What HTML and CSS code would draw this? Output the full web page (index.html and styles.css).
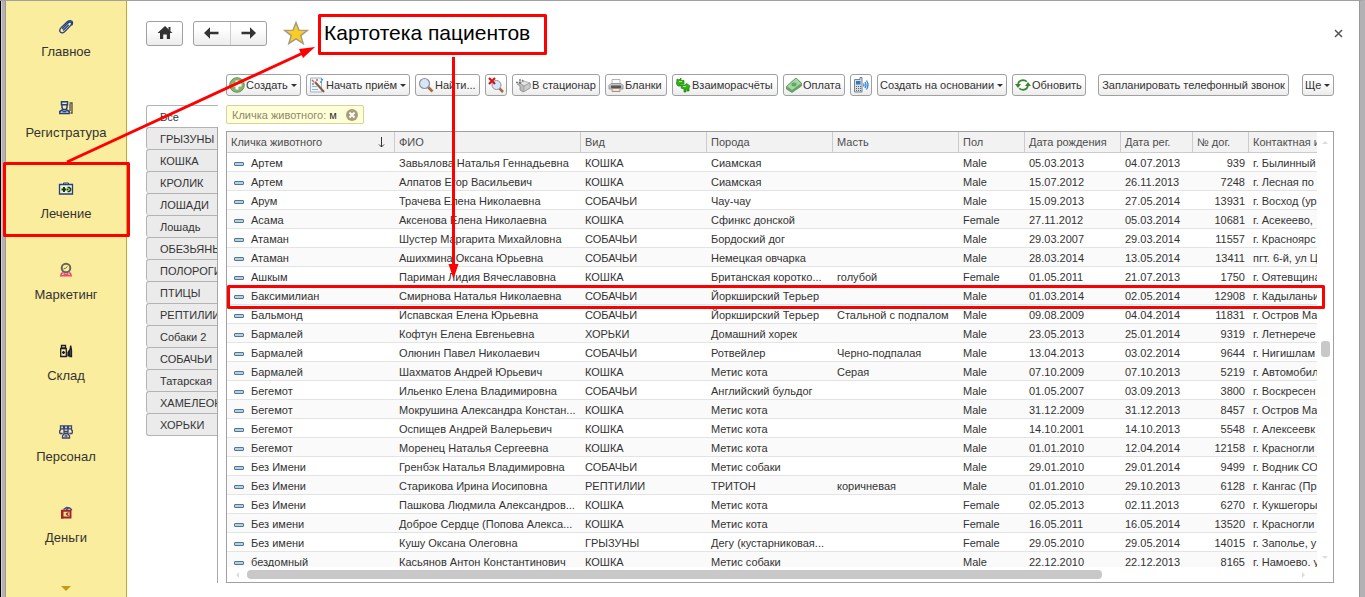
FILE: index.html
```html
<!DOCTYPE html>
<html lang="ru">
<head>
<meta charset="utf-8">
<title>Картотека пациентов</title>
<link rel="stylesheet" href="styles.css">
</head>
<body>
<div class="window">
<nav class="sections" aria-label="Разделы">
  <a class="section" href="#main"><svg width="16" height="16" viewBox="0 0 16 16" fill="none" stroke="#233f86" stroke-width="1.3" stroke-linecap="round"><path d="M4.500 9.500 10 4q2-1.700 3.200-.400 1 1.300-.700 3L6.600 12.700q-2.400 2-4.200.400-1.600-1.900.500-4.200L9 3q2.500-2 4.600-1 1.700 1.500.300 4M5.500 11l4.800-4.800"/></svg><span>Главное</span></a>
  <a class="section" href="#desk"><svg width="16" height="16" viewBox="0 0 16 16" fill="none" stroke="#233f86" stroke-width="1.500"><path d="M3.500 1.800h6v3h-6zM4 5v2.500l1 2h3l1-2V5M5 9.500l-3.200 2v2h9.400v-2L8 9.500M4.500 11.500h4"/><path stroke="#4d4b3c" stroke-width="1.300" d="M11.500 3H14v10h-1.500M12 4v7"/></svg><span>Регистратура</span></a>
  <a class="section" href="#care"><svg width="16" height="16" viewBox="0 0 16 16"><path fill="#f5f3cf" stroke="#233f86" stroke-width="1.300" d="M1.500 3.500h13v9.500h-13z"/><path fill="none" stroke="#233f86" d="M5.500 3.500V2h5v1.500"/><path fill="none" stroke="#114010" stroke-width="2" d="M3.500 8.500h5M6 6v5"/><path fill="none" stroke="#114010" stroke-width="1.600" d="M9.500 6.500h1.700l1.300 1.200v1.600l-1.300 1.200H9.500M9 8.500h1.500"/></svg><span>Лечение</span></a>
  <a class="section" href="#marketing"><svg width="16" height="16" viewBox="0 0 16 16" fill="none"><circle cx="8" cy="6" r="4.300" stroke="#66655a" stroke-width="2"/><path stroke="#66655a" d="M5.500 7Q8 6.500 9.500 4.500M4 9.500h2"/><path stroke="#ee4777" stroke-width="1.600" d="M4.800 10.500Q3 11.500 2.800 13.700h10.400q-.200-2.200-2-3.200M5.500 11.500 8 13l2.500-1.500"/></svg><span>Маркетинг</span></a>
  <a class="section" href="#stock"><svg width="16" height="16" viewBox="0 0 16 16" fill="none" stroke="#1b1c2b" stroke-width="1.300"><path d="M3.500 2.500h4V5h-4zM2.700 5.500h5.600v8H2.700zM4 9.500h3M5.500 8v3M10 13.500v-4l1-1.500v5.500M12 13.500V7l.700-4.500.800 4.500v6.500z"/></svg><span>Склад</span></a>
  <a class="section" href="#staff"><svg width="16" height="16" viewBox="0 0 16 16" fill="none" stroke="#33427f" stroke-width="1.300"><path d="M2.500 1.800h3v3h-3zM6.500 1.800h3v3h-3zM10.500 1.800h3v3h-3zM1.700 9.500V6.800L3 5M14.300 9.500V6.800L13 5M1.700 9.500h3M11.300 9.500h3M6 5.500v4h4v-4M6 7.500h4M4.500 14v-2L6 9.800h4l1.500 2.200v2zM6.500 12h3"/></svg><span>Персонал</span></a>
  <a class="section" href="#money"><svg width="16" height="16" viewBox="0 0 16 16" fill="none"><path stroke="#2f4a8e" stroke-width="1.400" d="m5.500 4.500 3-2 3 .500 2.500 2M8 5l2-1.500"/><path fill="#f7dc98" stroke="#a32222" stroke-width="1.900" d="M4 5.800h8.500v6.700H4z"/><path fill="#a32222" d="M3 5h2.500v8.500H3z"/><path stroke="#a32222" stroke-width="1.300" d="M10.500 7.500 8.500 9l2 1.700"/></svg><span>Деньги</span></a>
  <button class="more" aria-label="Ещё разделы"></button>
</nav>
<main class="main">
  <header class="head">
    <button class="tool home" aria-label="Домой"><svg width="16" height="14" viewBox="0 0 16 14" fill="#333"><path d="M8 0 15.500 7H13v6H9.800V8.500H6.200V13H3V7H.500zM11.500 1h2v4l-2-2z"/></svg></button>
    <div class="history">
      <button aria-label="Назад"><svg width="15" height="12" viewBox="0 0 15 12"><path fill="#333" d="M0 6 6 .300V4.800h8.500v2.400H6v4.500z"/></svg></button>
      <button aria-label="Вперёд"><svg width="15" height="12" viewBox="0 0 15 12"><path fill="#333" d="M15 6 9 .300V4.800H.500v2.400H9v4.500z"/></svg></button>
    </div>
    <svg class="star" width="26" height="24" viewBox="0 0 26 24"><path fill="#f9cc27" stroke="#a09a80" stroke-width="1.400" d="m13 1.500 2.900 7.600 8.600.300-6.700 5.200 2.400 8-7.200-4.700-7.200 4.700 2.400-8L1.500 9.400l8.600-.300z"/></svg>
    <h1>Картотека пациентов</h1>
    <button class="close" aria-label="Закрыть"><svg width="9" height="9" viewBox="0 0 9 9"><path d="m1 1 7 7M8 1 1 8" stroke="#555" stroke-width="1.500"/></svg></button>
  </header>
  <div class="toolbar">
    <button class="tool drop"><svg width="16" height="16" viewBox="0 0 16 16"><circle cx="8" cy="8" r="7.300" fill="#83b56d" stroke="#68915a"/><path d="M8 3.500v9M3.500 8h9" stroke="#fff" stroke-width="3"/></svg>Создать</button>
    <button class="tool drop w-start"><svg width="16" height="16" viewBox="0 0 16 16"><path fill="#f0f5fa" stroke="#9bb2c7" d="M1.500 1h11v14h-11z"/><path stroke="#9bb2c7" d="M3 9.500h5M3 12.500h6"/><path stroke="#855c42" stroke-width="2" d="m6 5 9 10"/><path stroke="#e45b4d" stroke-width="1.500" d="M3 3l2 2M8 2v2"/><path stroke="#3d9bd0" stroke-width="1.500" d="M12 2l2 1M11 5h2M3 7h2"/></svg>Начать приём</button>
    <button class="tool w-find"><svg width="16" height="16" viewBox="0 0 16 16"><path d="m10 10 4.500 4.500" stroke="#a36b43" stroke-width="2.600"/><circle cx="6.500" cy="6.500" r="5" fill="#d4e8fa" stroke="#998f96" stroke-width="1.200"/></svg>Найти...</button>
    <button class="tool icon-only" aria-label="Отменить поиск"><svg width="16" height="16" viewBox="0 0 16 16"><path d="m11 11 4 4" stroke="#a36b43" stroke-width="2.500"/><circle cx="8.500" cy="8" r="4.500" fill="#d4e8fa" stroke="#998f96"/><path d="m1 1 6 6M7 1 1 7" stroke="#cf1717" stroke-width="2.200"/></svg></button>
    <button class="tool w-ward"><svg width="16" height="16" viewBox="0 0 16 16"><path fill="#bbb" stroke="#888" stroke-width=".800" d="m2 7 3 2v4l3 2 7-4V6L9 9 5 6V4"/><path fill="#e4e4e4" stroke="#999" stroke-width=".700" d="m5 6 4-2 6 2-6 3z"/><path fill="#ccc" stroke="#999" stroke-width=".700" d="m9 9 6-3v5l-6 3.500z"/><path stroke="#777" stroke-width="1.400" stroke-dasharray="2 1" d="M1 5.500h5M5 2v6M7 3l2 2"/></svg>В стационар</button>
    <button class="tool w-forms"><svg width="16" height="16" viewBox="0 0 16 16"><path fill="#fafafa" stroke="#b4b4b4" d="M4 2.500h8V7H4z"/><path fill="#c4c4c4" stroke="#969696" d="m3 6.500-2 2V12h14V8.500l-2-2z"/><path fill="#555" d="M3 8.500h10V11H3z"/><path fill="#f4e4d4" stroke="#a78f82" d="M4 11.500h8v3H4z"/></svg>Бланки</button>
    <button class="tool w-mutual"><svg width="16" height="16" viewBox="0 0 16 16"><path fill="#34b318" stroke="#187b0a" stroke-width=".700" d="M2 2l2 1 2-2v2.500h3V7H5v1h5l2-1.500L13.500 8l1.500 1-1 2v3h-2v-2h-1v3H9v-3l-3-1 1-2H3L1.500 7z"/><path stroke="#9def76" d="M4 4.500h3M8 9.500h3"/></svg>Взаиморасчёты</button>
    <button class="tool w-pay"><svg width="16" height="16" viewBox="0 0 16 16"><path fill="#64a766" stroke="#568b57" stroke-width=".700" d="M.500 9.500 10 1l5.500 5v3L6 15.500.500 12z"/><path fill="#a3d6a2" stroke="#589c59" stroke-width=".700" d="M.500 9.500 10 1l5.500 5.500L6 13.500z"/><ellipse cx="8" cy="7.500" rx="2.600" ry="2" fill="#65a767"/></svg>Оплата</button>
    <button class="tool icon-only" aria-label="Телефон"><svg width="16" height="16" viewBox="0 0 16 16"><path fill="#d8dde2" stroke="#78838e" d="M1.500 2.500H7V.500h2v14.500H1.500z"/><path fill="#287bc4" d="M3 4h4.500v3.500H3z"/><path d="M3 9.500h5M3 11.500h5M3 13.500h5" stroke="#546473" stroke-dasharray="1 1"/><path fill="none" stroke="#2d83d1" stroke-width="1.300" d="M10.500 6.500q1 1.500 0 3M12 5q2 3 0 6M13.500 3.500q3 4.500 0 9"/></svg></button>
    <button class="tool drop w-based">Создать на основании</button>
    <button class="tool w-refresh"><svg width="16" height="16" viewBox="0 0 16 16"><path fill="none" stroke="#37862d" stroke-width="1.700" d="M3 8.500Q3 3.500 8 3.200q2.500 0 3.700 1.500M13 7.500q0 5-5 5.300-2.500 0-3.700-1.500"/><path fill="#37862d" d="m0 7 3 4 3-4zM10 9h6l-3-4z"/></svg>Обновить</button>
    <button class="tool w-call">Запланировать телефонный звонок</button>
    <button class="tool drop w-more">Ще</button>
  </div>
  <div class="work">
    <nav class="kinds" aria-label="Вид животного">
      <button class="kind current">Все</button><button class="kind">ГРЫЗУНЫ</button><button class="kind">КОШКА</button><button class="kind">КРОЛИК</button><button class="kind">ЛОШАДИ</button><button class="kind">Лошадь</button><button class="kind">ОБЕЗЬЯНЫ</button><button class="kind">ПОЛОРОГИ</button><button class="kind">ПТИЦЫ</button><button class="kind">РЕПТИЛИИ</button><button class="kind">Собаки 2</button><button class="kind">СОБАЧЬИ</button><button class="kind">Татарская</button><button class="kind">ХАМЕЛЕОН</button><button class="kind">ХОРЬКИ</button>
    </nav>
    <section class="content">
      <div class="filter"><span>Кличка животного: <b>м</b></span><button aria-label="Снять отбор"><svg width="12" height="12" viewBox="0 0 12 12"><circle cx="6" cy="6" r="6" fill="#a99d79"/><path d="m3.500 3.500 5 5M8.500 3.500l-5 5" stroke="#fff" stroke-width="1.800"/></svg></button></div>
      <div class="grid">
        <div class="view">
          <table>
            <colgroup><col class="c-name"><col class="c-owner"><col class="c-kind"><col class="c-kind"><col class="c-kind"><col class="c-sex"><col class="c-born"><col class="c-reg"><col class="c-num"><col></colgroup>
            <thead><tr><th><div class="sorted">Кличка животного<svg width="7" height="11" viewBox="0 0 7 11"><path fill="none" stroke="#333" d="M3.500 0v10M1 7.500 3.500 10 6 7.500"/></svg></div></th><th>ФИО</th><th>Вид</th><th>Порода</th><th>Масть</th><th>Пол</th><th>Дата рождения</th><th>Дата рег.</th><th>№ дог.</th><th>Контактная и</th></tr></thead>
            <tbody>
<tr><td>Артем</td><td>Завьялова Наталья Геннадьевна</td><td>КОШКА</td><td>Сиамская</td><td></td><td>Male</td><td>05.03.2013</td><td>04.07.2013</td><td>939</td><td>г. Былинный</td></tr>
<tr><td>Артем</td><td>Алпатов Егор Васильевич</td><td>КОШКА</td><td>Сиамская</td><td></td><td>Male</td><td>15.07.2012</td><td>26.11.2013</td><td>7248</td><td>г. Лесная по</td></tr>
<tr><td>Арум</td><td>Трачева Елена Николаевна</td><td>СОБАЧЬИ</td><td>Чау-чау</td><td></td><td>Male</td><td>15.09.2013</td><td>27.05.2014</td><td>13931</td><td>г. Восход (ур</td></tr>
<tr><td>Асама</td><td>Аксенова Елена Николаевна</td><td>КОШКА</td><td>Сфинкс донской</td><td></td><td>Female</td><td>27.11.2012</td><td>05.03.2014</td><td>10681</td><td>г. Асекеево,</td></tr>
<tr><td>Атаман</td><td>Шустер Маргарита Михайловна</td><td>СОБАЧЬИ</td><td>Бордоский дог</td><td></td><td>Male</td><td>29.03.2007</td><td>29.03.2014</td><td>11557</td><td>г. Красноярс</td></tr>
<tr><td>Атаман</td><td>Ашихмина Оксана Юрьевна</td><td>СОБАЧЬИ</td><td>Немецкая овчарка</td><td></td><td>Male</td><td>28.03.2014</td><td>13.05.2014</td><td>13411</td><td>пгт. 6-й, ул Ц</td></tr>
<tr><td>Ашкым</td><td>Париман Лидия Вячеславовна</td><td>КОШКА</td><td>Британская коротко...</td><td>голубой</td><td>Female</td><td>01.05.2011</td><td>21.07.2013</td><td>1750</td><td>г. Оятевщина</td></tr>
<tr><td>Баксимилиан</td><td>Смирнова Наталья Николаевна</td><td>СОБАЧЬИ</td><td>Йоркширский Терьер</td><td></td><td>Male</td><td>01.03.2014</td><td>02.05.2014</td><td>12908</td><td>г. Кадыланьи</td></tr>
<tr><td>Бальмонд</td><td>Испавская Елена Юрьевна</td><td>СОБАЧЬИ</td><td>Йоркширский Терьер</td><td>Стальной с подпалом</td><td>Male</td><td>09.08.2009</td><td>04.04.2014</td><td>11831</td><td>г. Остров Ма</td></tr>
<tr><td>Бармалей</td><td>Кофтун Елена Евгеньевна</td><td>ХОРЬКИ</td><td>Домашний хорек</td><td></td><td>Male</td><td>23.05.2013</td><td>25.01.2014</td><td>9319</td><td>г. Летнерече</td></tr>
<tr><td>Бармалей</td><td>Олюнин Павел Николаевич</td><td>СОБАЧЬИ</td><td>Ротвейлер</td><td>Черно-подпалая</td><td>Male</td><td>13.04.2013</td><td>03.02.2014</td><td>9644</td><td>г. Нигишлам</td></tr>
<tr><td>Бармалей</td><td>Шахматов Андрей Юрьевич</td><td>КОШКА</td><td>Метис кота</td><td>Серая</td><td>Male</td><td>07.10.2009</td><td>07.10.2013</td><td>5219</td><td>г. Автомобил</td></tr>
<tr><td>Бегемот</td><td>Ильенко Елена Владимировна</td><td>СОБАЧЬИ</td><td>Английский бульдог</td><td></td><td>Male</td><td>01.05.2007</td><td>03.09.2013</td><td>3800</td><td>г. Воскресен</td></tr>
<tr><td>Бегемот</td><td>Мокрушина Александра Констан...</td><td>КОШКА</td><td>Метис кота</td><td></td><td>Male</td><td>31.12.2009</td><td>31.12.2013</td><td>8457</td><td>г. Остров Ма</td></tr>
<tr><td>Бегемот</td><td>Оспищев Андрей Валерьевич</td><td>КОШКА</td><td>Метис кота</td><td></td><td>Male</td><td>14.10.2001</td><td>14.10.2013</td><td>5548</td><td>г. Алексеевк</td></tr>
<tr><td>Бегемот</td><td>Моренец Наталья Сергеевна</td><td>КОШКА</td><td>Метис кота</td><td></td><td>Male</td><td>01.01.2010</td><td>12.04.2014</td><td>12158</td><td>г. Красногли</td></tr>
<tr><td>Без Имени</td><td>Гренбэк Наталья Владимировна</td><td>СОБАЧЬИ</td><td>Метис собаки</td><td></td><td>Male</td><td>29.01.2010</td><td>29.01.2014</td><td>9499</td><td>г. Водник СО</td></tr>
<tr><td>Без Имени</td><td>Старикова Ирина Иосиповна</td><td>РЕПТИЛИИ</td><td>ТРИТОН</td><td>коричневая</td><td>Male</td><td>01.01.2010</td><td>29.10.2013</td><td>6128</td><td>г. Кангас (Пр</td></tr>
<tr><td>Без Имени</td><td>Пашкова Людмила Александров...</td><td>КОШКА</td><td>Метис кота</td><td></td><td>Female</td><td>02.05.2013</td><td>02.11.2013</td><td>6270</td><td>г. Кукшегоры</td></tr>
<tr><td>Без имени</td><td>Доброе Сердце (Попова Алекса...</td><td>КОШКА</td><td>Метис кота</td><td></td><td>Female</td><td>16.05.2011</td><td>16.05.2014</td><td>13520</td><td>г. Красногли</td></tr>
<tr><td>Без имени</td><td>Кушу Оксана Олеговна</td><td>ГРЫЗУНЫ</td><td>Дегу (кустарниковая...</td><td></td><td>Female</td><td>29.05.2010</td><td>29.05.2014</td><td>14015</td><td>г. Заполье, у</td></tr>
<tr><td>бездомный</td><td>Касьянов Антон Константинович</td><td>КОШКА</td><td>Метис собаки</td><td></td><td>Male</td><td>22.12.2010</td><td>22.12.2013</td><td>8165</td><td>г. Намоево. у</td></tr>
            </tbody>
          </table>
        </div>
        <div class="vbar"><i class="up"></i><i class="thumb"></i><i class="down"></i></div>
        <div class="hbar"><i class="left"></i><i class="thumb"></i><i class="right"></i></div>
      </div>
    </section>
  </div>
</main>
</div>
<svg class="marks" width="1330" height="320" viewBox="0 0 1330 320" fill="none" stroke="#f00" stroke-width="3" stroke-linejoin="round" aria-hidden="true">
  <path d="M4.500 163.500h124v72h-124zM319.500 15.500h226v38h-226zM228.500 286.500h1095v21h-1095zM67 162 303 53M453.500 57v212"/>
  <path fill="#f00" stroke="none" d="m315 47-12 11-4-9zM453.500 279l-5-15h10z"/>
</svg>
</body>
</html>
```
FILE: styles.css
```css
* { box-sizing: border-box; }
body { margin: 0; height: 100vh; overflow: hidden; font-family: "Liberation Sans", Arial, sans-serif; font-size: 11px; color: #333; background: #fff; }
button { font: inherit; color: inherit; margin: 0; padding: 0; border: 0; background: none; }
svg { flex: none; display: block; }
h1 { margin: 0; font-weight: normal; }
.window { display: flex; height: 100%; border-top: 1px solid #a0a0a0; border-right: 5px solid #b3b1b3; box-shadow: inset -1px 0 #999; }
.sections { flex: none; width: 127px; display: flex; flex-direction: column; align-items: stretch; padding-top: 18px; border-right: 1px solid #c4a72d; background: linear-gradient(90deg, #000 1px, #d0ced0 1px 2px, #b4b0b4 2px 5px, #9c999c 5px 6px, #fbed9e 6px); }
.section { height: 81px; padding-left: 6px; display: flex; flex-direction: column; align-items: center; gap: 9px; color: #333; text-decoration: none; font-size: 13px; line-height: 16px; flex: none; }
.more { align-self: center; margin-left: 5px; border: 5px solid transparent; border-top-color: #c39b18; border-bottom: 0; }
.main { flex: 1; min-width: 0; display: flex; flex-direction: column; padding: 13px 26px 14px 19px; }
.head { display: flex; align-items: center; height: 38px; }
.tool, .history { border: 1px solid #a0a0a0; border-radius: 3px; background: linear-gradient(#fff 30%, #ececec); }
.home { width: 37px; height: 25px; }
.head .tool, .history button { display: flex; align-items: center; justify-content: center; }
.history { display: flex; width: 74px; height: 25px; margin-left: 10px; }
.history button { flex: 1; }
.history button + button { border-left: 1px solid #ccc; }
.star { margin-left: 16px; }
.head h1 { margin-left: 15px; font-size: 21px; color: #000; }
.close { margin-left: auto; margin-right: -9px; }
.toolbar { display: flex; gap: 5px; margin: 22px 0 9px 80px; }
.toolbar .tool { height: 22px; display: flex; align-items: center; gap: 1px; padding: 0 2px; white-space: nowrap; flex: none; width: 75px; }
.drop::after { content: ""; margin: 0 1px 0 auto; border: 3px solid transparent; border-top-color: #333; border-bottom: 0; }
.toolbar .icon-only { width: 22px; }
.toolbar .w-start { width: 104px; }
.toolbar .w-find { width: 65px; }
.toolbar .w-ward { width: 88px; }
.toolbar .w-forms { width: 62px; }
.toolbar .w-mutual { width: 106px; }
.toolbar .w-pay { width: 62px; }
.toolbar .w-based { width: 130px; }
.toolbar .w-refresh { width: 74px; }
.toolbar .w-call { width: 191px; margin-left: 7px; justify-content: center; }
.toolbar .w-more { width: 32px; margin-left: auto; }
.work { flex: 1; min-height: 0; display: flex; gap: 8px; }
.kinds { flex: none; width: 72px; border-right: 1px solid #a8a8a8; }
.kind { display: block; width: 71px; height: 22px; padding-left: 13px; overflow: hidden; text-align: left; white-space: nowrap; border: 1px solid #b4b4b4; border-right: 0; border-bottom: 0; border-radius: 3px 0 0 3px; background: #ebebeb; }
.kind:last-child { height: 23px; border-bottom: 1px solid #b4b4b4; }
.kind.current { width: 72px; background: #fff; }
.content { flex: 1; min-width: 0; display: flex; flex-direction: column; }
.filter { align-self: flex-start; display: flex; align-items: center; gap: 8px; width: 138px; height: 19px; padding: 0 5px; border: 1px solid #dccf98; border-radius: 2px; background: #ffffd8; color: #8f8868; white-space: nowrap; }
.filter b { font-weight: normal; color: #333; }
.filter button { margin-left: auto; }
.grid { flex: 1; min-height: 0; margin-top: 7px; border: 1px solid #a0a0a0; display: grid; grid-template: minmax(0, 1fr) 15px / minmax(0, 1fr) 16px; }
.view { overflow: hidden; }
table { width: 100%; table-layout: fixed; border-collapse: separate; border-spacing: 0; line-height: 16px; }
.c-name { width: 168px; } .c-owner { width: 186px; } .c-kind { width: 126px; } .c-sex { width: 66px; } .c-born { width: 96px; } .c-reg { width: 72px; } .c-num { width: 56px; }
th, td { padding: 0 4px; overflow: hidden; white-space: nowrap; text-align: left; font-weight: normal; }
th { height: 21px; background: #f2f2f2; color: #4d4d4d; border-right: 1px solid #ccc; border-bottom: 1px solid #ccc; }
th:last-child { border-right: 0; }
th:last-child, td:last-child { padding-right: 0; }
.sorted { display: flex; justify-content: space-between; align-items: center; padding-right: 5px; }
td { height: 19px; padding-top: 2px; border-bottom: 1px solid #e4e4e4; }
tr:nth-child(even) td { background: #fafafa; }
td:nth-child(9) { text-align: right; }
td:first-child::before { content: ""; box-sizing: border-box; display: inline-block; width: 10px; height: 4px; margin: 0 7px 0 3px; vertical-align: middle; border: 1px solid #527590; border-radius: 1px; background: #b5d1e2; }
.vbar { display: flex; flex-direction: column; align-items: center; padding: 9px 0 8px; }
.vbar .thumb { width: 9px; height: 16px; margin: 197px 0 auto; border-radius: 3px; background: #c8c8c8; }
.up, .down, .left, .right { border: 3px solid transparent; }
.up { border-top: 0; border-bottom-color: #ddd; }
.down { border-bottom: 0; border-top-color: #ddd; }
.left { border-left: 0; border-right-color: #ddd; }
.right { border-right: 0; border-left-color: #ddd; }
.hbar { display: flex; align-items: center; padding: 0 12px 0 9px; }
.hbar .thumb { flex: 0 1 80%; height: 9px; margin: 0 auto 0 8px; border-radius: 4px; background: #c8c8c8; }
.marks { position: absolute; left: 0; top: 0; pointer-events: none; }
```
